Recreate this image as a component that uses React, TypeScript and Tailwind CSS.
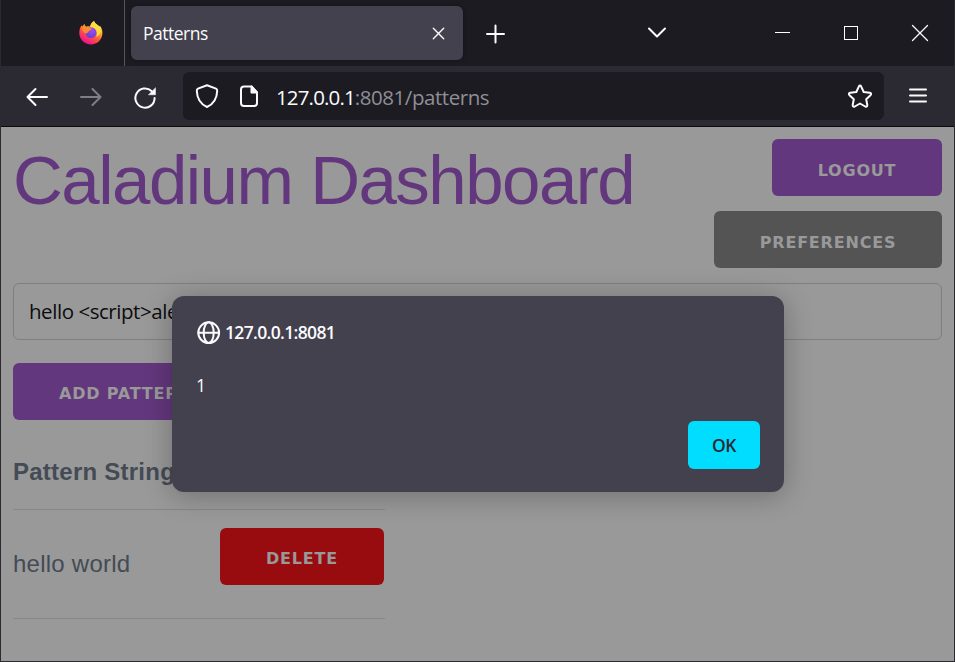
import React from "react";

type IconProps = {
  box: string;
  className?: string;
  children: React.ReactNode;
};

function Icon({ box, className = "", children }: IconProps) {
  return (
    <svg
      viewBox={box}
      className={`h-6 w-6 shrink-0 overflow-visible ${className}`}
      fill="none"
      stroke="#fbfbfe"
      strokeWidth={2}
      strokeLinecap="round"
      strokeLinejoin="round"
    >
      {children}
    </svg>
  );
}

function FirefoxLogo() {
  return (
    <svg viewBox="79 21 24 24" className="h-6 w-6 shrink-0">
      <defs>
        <linearGradient id="flame" x1="0.85" y1="0.05" x2="0.3" y2="0.95">
          <stop offset="0" stopColor="#fff04a" />
          <stop offset="0.3" stopColor="#ffb931" />
          <stop offset="0.6" stopColor="#ff5a38" />
          <stop offset="1" stopColor="#ee1190" />
        </linearGradient>
        <radialGradient id="globe" cx="0.6" cy="0.3" r="0.8">
          <stop offset="0" stopColor="#a04cf5" />
          <stop offset="1" stopColor="#5a3ed0" />
        </radialGradient>
      </defs>
      <path
        d="M94 21 C95 23.500 97.500 24.500 99.500 26.500 L100 25.800 C102 28.500 102.600 31 102.400 33.500 C102 40 97 44.400 91 44.400 C84.500 44.400 79.300 39.500 79.300 33 C79.300 30 80 27.500 81.500 25.300 L82.300 27 C82.800 25.700 83.500 24.600 84.600 23.800 C84.700 25.300 85.300 26.200 86.300 26.700 C87.500 26.200 88.700 26.200 90 26.500 C90.500 24.200 92 22.500 94 21Z"
        fill="url(#flame)"
      />
      <circle cx="91" cy="32.600" r="5.400" fill="url(#globe)" />
      <path
        d="M81.500 26.500 C84.500 25.800 87 26.500 88 27.800 L91.800 28.300 C91.300 29.800 90 30.600 88.800 30.900 C88.500 32.500 87.500 32.600 86 33.500 C83.500 32.500 81.500 30 81.500 26.500Z"
        fill="#ff8a30"
      />
      <path
        d="M94 21 C91.500 22.500 90 25 90.500 27 C94.500 27 97.500 30 97 34 C96.900 35.500 96.500 36.500 96 37.300 C101 35 102 29 98.500 25.800 C96 24 94.500 23 94 21Z"
        fill="#ffdc40"
      />
    </svg>
  );
}

function TitleBar() {
  return (
    <div className="flex h-[66px] shrink-0 items-center bg-[#1c1b22] pl-[78px]">
      <FirefoxLogo />
      <div className="ml-[21px] h-full w-px shrink-0 bg-[#55545c]" />
      <div className="ml-[6px] flex h-[54px] w-[332px] shrink-0 items-center justify-between rounded-md bg-[#42414d] pr-[13px] pl-3 shadow-[0_0_4px_rgba(0,0,0,0.4)]">
        <span className="text-[17.500px] tracking-[-0.500px] text-[#fbfbfe]">Patterns</span>
        <Icon box="426 21 24 24">
          <path d="M433.300 28.300 L443.700 38.700 M443.700 28.300 L433.300 38.700" strokeWidth={1.400} />
        </Icon>
      </div>
      <Icon box="483 21 24 24" className="ml-5">
        <path d="M487 34 H504 M495.500 25.500 V42.500" />
      </Icon>
      <Icon box="645 21 24 24" className="ml-[138px]">
        <path d="M649 28.500 L657 36.500 L665 28.500" />
      </Icon>
      <Icon box="771 21 24 24" className="ml-[102px]">
        <path d="M775 32.500 H790" strokeWidth={1} strokeLinecap="butt" stroke="#fff" />
      </Icon>
      <Icon box="839 21 24 24" className="ml-[44px]">
        <rect x="844.500" y="26.500" width="13" height="13" strokeWidth={1} strokeLinejoin="miter" stroke="#fff" />
      </Icon>
      <Icon box="908 21 24 24" className="ml-[45px]">
        <path d="M912.500 25.500 L927.500 40.500 M927.500 25.500 L912.500 40.500" strokeWidth={1.300} />
      </Icon>
    </div>
  );
}

function NavBar() {
  return (
    <div className="flex h-[61px] shrink-0 items-start border-b border-[#0c0c0d] bg-[#2b2a33] pl-6">
      <div className="flex h-[60px] items-center gap-[30px]">
        <Icon box="25 84 24 24">
          <path d="M27.500 97 H47 M35.500 89 L27.500 97 L35.500 105" />
        </Icon>
        <Icon box="79 84 24 24" className="opacity-40">
          <path d="M81 97 H100.500 M92.500 89 L100.500 97 L92.500 105" />
        </Icon>
        <Icon box="133 84 24 24">
          <path d="M154.600 98 A9.600 9.600 0 1 1 151.500 91" />
          <path d="M155.500 88 V94.800 H148.700 Z" fill="#fbfbfe" strokeWidth={0.500} />
        </Icon>
      </div>
      <div className="mt-[6px] ml-[26px] flex h-12 w-[701px] items-center rounded-md bg-[#1c1b22] px-3">
        <Icon box="195 84 24 24">
          <path d="M207 85.300 L216 88.600 Q217.300 89.200 217.200 90.700 C217 98.500 214.500 103.500 207 107 C199.500 103.500 197 98.500 196.800 90.700 Q196.700 89.200 198 88.600 Z" />
        </Icon>
        <Icon box="237 84 24 24" className="ml-[18px]">
          <path d="M251.500 86.500 H244 A3 3 0 0 0 241 89.500 V103 A3 3 0 0 0 244 106 H254 A3 3 0 0 0 257 103 V92.500 Z" />
          <path d="M251.500 86.500 V92.500 H257 Z" fill="#fbfbfe" />
        </Icon>
        <div className="ml-[15px] flex-1 pt-px text-[20.500px] leading-6 whitespace-nowrap">
          <span className="tracking-[-0.850px] text-[#fbfbfe]">127.0.0.1</span>
          <span className="tracking-[-0.450px] text-[#8f8f96]">:8081/patterns</span>
        </div>
        <Icon box="848 84 24 24">
          <path d="M858.800 86.600 Q860 84.600 861.200 86.600 L863.700 92 L869.800 92.800 Q872 93.400 870.500 95.200 L866.200 99.200 L867.300 105 Q867.300 107.300 865.200 106.500 L860 103.500 L854.800 106.500 Q852.700 107.300 852.700 105 L853.800 99.200 L849.500 95.200 Q848 93.400 850.200 92.800 L856.300 92 Z" />
        </Icon>
      </div>
      <Icon box="906 84 24 24" className="mt-[18px] ml-[22px]">
        <path d="M910 89.500 H926 M910 95.500 H926 M910 101.500 H926" />
      </Icon>
    </div>
  );
}

function Button({ className, children }: { className: string; children: string }) {
  return (
    <button
      className={`h-[57px] shrink-0 rounded-[6px] text-center font-['DejaVu_Sans'] text-[16px] font-bold tracking-[0.800px] whitespace-nowrap text-[#99999a] ${className}`}
    >
      {children}
    </button>
  );
}

function Dashboard() {
  return (
    <main className="min-h-0 flex-1 bg-[#99999a] p-3 font-['Liberation_Sans',Arial,sans-serif] text-[24px] tracking-[0.240px] text-[#444b54]">
      <header className="flex items-start justify-between">
        <h1 className="pt-px text-[69px] leading-[82.800px] tracking-[-1.500px] whitespace-nowrap text-[#63377d]">
          Caladium Dashboard
        </h1>
        <div className="flex flex-col items-end gap-[15px]">
          <Button className="w-[170px] bg-[#63377d] pt-[6px]">LOGOUT</Button>
          <Button className="w-[228px] bg-[#545455] pt-[6px]">PREFERENCES</Button>
        </div>
      </header>
      <div className="mt-[15px] flex h-[57px] items-center rounded-[6px] border border-[#7f7f80] px-[15px] font-['Open_Sans',sans-serif] text-[20.500px] tracking-[-0.450px] text-[#0c0c0d]">
        hello &lt;script&gt;ale
      </div>
      <Button className="mt-[23px] block w-[211px] bg-[#63377d] pt-[5px] pl-[46px] text-left">ADD PATTERN</Button>
      <section className="mt-[15px] w-[372px]">
        <div className="flex h-[75px] items-center border-b border-[#878788] font-bold">Pattern String</div>
        <div className="flex h-[109px] items-start justify-between border-b border-[#878788] pt-[18px]">
          <span className="mt-[17px] leading-[38px]">hello world</span>
          <Button className="mr-px w-[164px] bg-[#980c10] pt-[5px]">DELETE</Button>
        </div>
      </section>
    </main>
  );
}

function AlertDialog() {
  return (
    <div className="absolute top-[296px] left-[172px] flex h-[196px] w-[612px] flex-col rounded-xl bg-[#42414d] px-6 pt-6 text-[#fbfbfe] shadow-[0_3px_28px_rgba(12,12,13,0.3)]">
      <div className="flex h-[25px] items-center">
        <Icon box="196 321 24 24">
          <circle cx="208.700" cy="332.700" r="10.400" />
          <ellipse cx="208.700" cy="332.700" rx="5" ry="10.400" />
          <path d="M198.500 332.700 H219" />
        </Icon>
        <span className="ml-[5px] text-[17.500px] font-semibold tracking-[-0.650px]">127.0.0.1:8081</span>
      </div>
      <div className="mt-[28px] h-6 text-[17.500px] leading-6">1</div>
      <button className="mt-6 h-12 w-[72px] self-end rounded-md bg-[#00ddff] pt-px text-[17.500px] font-semibold tracking-[-0.500px] text-[#2b2a33]">
        OK
      </button>
    </div>
  );
}

export default function App() {
  return (
    <div className="relative flex h-[662px] w-[955px] flex-col overflow-hidden border-x border-b border-[#2b2a2e] font-['Open_Sans',sans-serif]">
      <TitleBar />
      <NavBar />
      <Dashboard />
      <div className="absolute inset-0 -left-px">
        <AlertDialog />
      </div>
    </div>
  );
}
